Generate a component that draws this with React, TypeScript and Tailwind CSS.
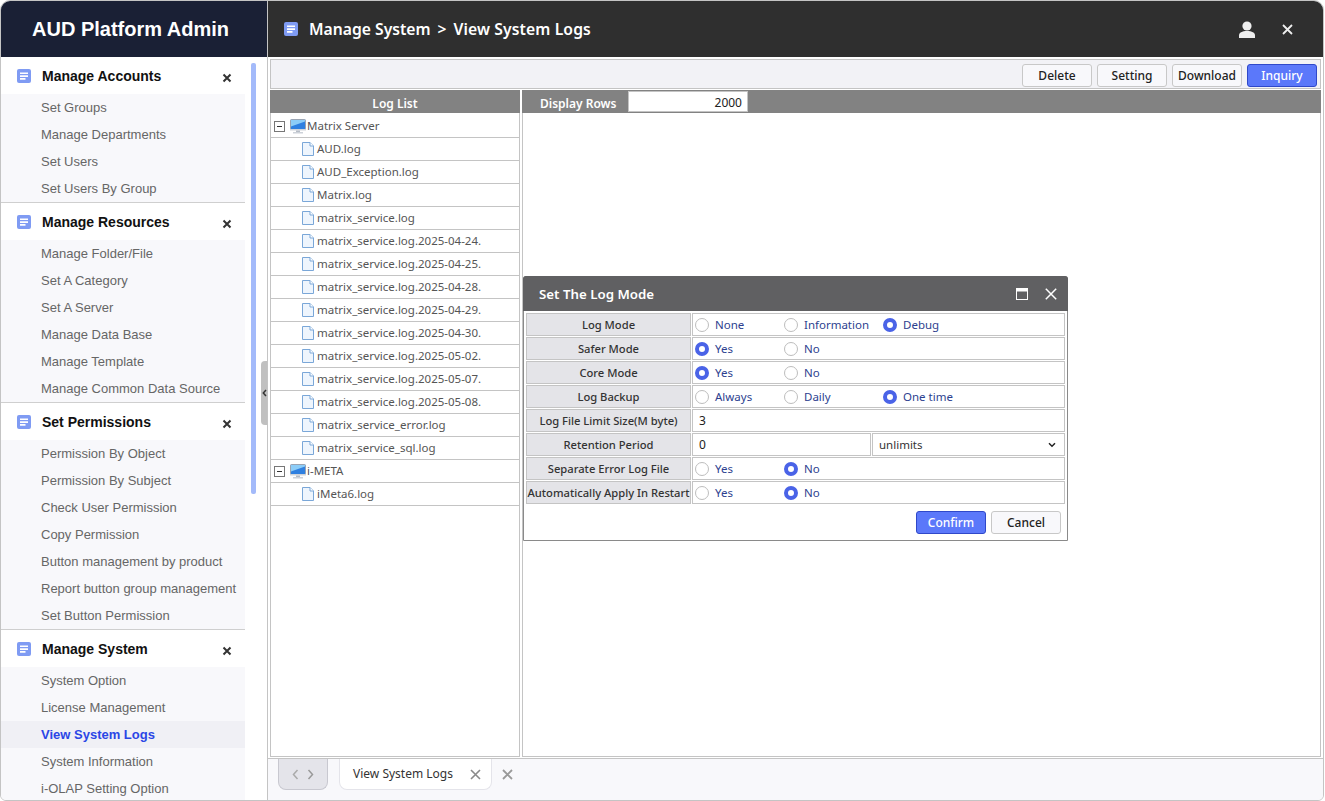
import React from 'react';

const menus = [
  { title: 'Manage Accounts', items: ['Set Groups', 'Manage Departments', 'Set Users', 'Set Users By Group'] },
  {
    title: 'Manage Resources',
    items: ['Manage Folder/File', 'Set A Category', 'Set A Server', 'Manage Data Base', 'Manage Template', 'Manage Common Data Source'],
  },
  {
    title: 'Set Permissions',
    items: [
      'Permission By Object',
      'Permission By Subject',
      'Check User Permission',
      'Copy Permission',
      'Button management by product',
      'Report button group management',
      'Set Button Permission',
    ],
  },
  { title: 'Manage System', items: ['System Option', 'License Management', 'View System Logs', 'System Information', 'i-OLAP Setting Option'] },
];

const matrixLogs = [
  'AUD.log',
  'AUD_Exception.log',
  'Matrix.log',
  'matrix_service.log',
  'matrix_service.log.2025-04-24.',
  'matrix_service.log.2025-04-25.',
  'matrix_service.log.2025-04-28.',
  'matrix_service.log.2025-04-29.',
  'matrix_service.log.2025-04-30.',
  'matrix_service.log.2025-05-02.',
  'matrix_service.log.2025-05-07.',
  'matrix_service.log.2025-05-08.',
  'matrix_service_error.log',
  'matrix_service_sql.log',
];

const sans = 'font-["Liberation_Sans",Arial,sans-serif]';
const ui = 'font-["Noto_Sans",sans-serif]';

function DocIcon() {
  return (
    <svg width="14" height="14" viewBox="0 0 14 14" className="shrink-0">
      <rect width="14" height="14" rx="2" fill="#7f9bf3" />
      <path d="M3 3.5h8v1.6H3zM3 6.3h8v1.6H3zM3 9.1h5.5v1.6H3z" fill="#fff" />
    </svg>
  );
}

function SmallX({ className }: { className: string }) {
  return (
    <svg width="10" height="10" viewBox="0 0 10 10" className={className}>
      <path d="M1.5 1.500l7 7M8.500 1.500l-7 7" stroke="currentColor" strokeWidth="2" fill="none" />
    </svg>
  );
}

function MenuGroup({ title, items }: { title: string; items: string[] }) {
  return (
    <div className="border-b border-[#cfcfcf] last:border-b-0">
      <div className="h-[37px] flex items-center pl-[16px] pr-[13px] bg-white">
        <span className="mt-[3px] -translate-y-[1px]">
          <DocIcon />
        </span>
        <span className={`ml-[11px] pt-[2px] text-[14px] font-bold text-[#111] ${sans}`}>{title}</span>
        <SmallX className="ml-auto mt-[4px] text-[#333]" />
      </div>
      <div className="bg-[#f8f8fb]">
        {items.map((item) => (
          <div
            key={item}
            className={`h-[27px] leading-[27px] pl-[40px] text-[13px] whitespace-nowrap ${sans} ${
              item === 'View System Logs' ? 'bg-[#f0f0f5] font-bold text-[#2b46e6]' : 'text-[#666]'
            }`}
          >
            {item}
          </div>
        ))}
      </div>
    </div>
  );
}

function Sidebar() {
  return (
    <aside className="w-[267px] shrink-0 flex flex-col border-r border-[#c4c4c4] relative overflow-hidden">
      <div className={`h-[56px] shrink-0 bg-[#1a2035] text-white text-[20px] font-bold flex items-center pl-[31px] ${sans}`}>
        AUD Platform Admin
      </div>
      <div className="w-[244px] flex-1 overflow-hidden">
        {menus.map((menu) => (
          <MenuGroup key={menu.title} title={menu.title} items={menu.items} />
        ))}
      </div>
      {/* scrollbar + collapse handle */}
      <div className="absolute left-[250px] top-[62px] w-[5px] h-[431px] rounded-[2px] bg-[#a3bafa]" />
      <div className="absolute left-[260px] top-[360px] w-[7px] h-[64px] rounded-l-[4px] bg-[#c0c0c0] flex items-center justify-center">
        <svg width="5" height="8" viewBox="0 0 5 8">
          <path d="M4 1L1.300 4 4 7" stroke="#333" strokeWidth="1.5" fill="none" />
        </svg>
      </div>
    </aside>
  );
}

function FileIcon() {
  return (
    <svg width="12" height="14" viewBox="0 0 12 14" className="shrink-0">
      <path d="M.5.5h7.500l3.500 3.500v9.500H.5z" fill="#eef5fd" stroke="#7aa7d8" />
      <path d="M8 .5v3.500h3.500" fill="#fff" stroke="#7aa7d8" />
    </svg>
  );
}

function MonitorIcon() {
  return (
    <svg width="16" height="15" viewBox="0 0 16 15" className="shrink-0">
      <rect x=".5" y=".5" width="15" height="10" rx="1" fill="#2f80e0" stroke="#9aa4b2" />
      <path d="M1 7.500L15 2.500V1H1z" fill="#8ccdf8" />
      <rect y="10" width="16" height="1.500" fill="#d0d4da" />
      <rect x="6" y="11.500" width="4" height="1.500" fill="#b5bcc6" />
      <rect x="3" y="13" width="10" height="1.500" fill="#cdd2d9" />
    </svg>
  );
}

function Expander() {
  return (
    <span className="w-[11px] h-[11px] border border-[#777] flex items-center justify-center shrink-0">
      <span className="w-[5px] h-[1px] bg-[#333]" />
    </span>
  );
}

function ServerRow({ name }: { name: string }) {
  return (
    <div className="h-[23px] flex items-center border-b border-[#c4c4c4] pl-[3px]">
      <Expander />
      <span className="ml-[5px]">
        <MonitorIcon />
      </span>
      <span className="ml-[1px] text-[11.5px] text-[#555]">{name}</span>
    </div>
  );
}

function FileRow({ name }: { name: string }) {
  return (
    <div className="h-[23px] flex items-center border-b border-[#c4c4c4] pl-[31px]">
      <FileIcon />
      <span className="ml-[3px] text-[11.5px] text-[#555] whitespace-nowrap">{name}</span>
    </div>
  );
}

function ToolButton({ label, primary }: { label: string; primary?: boolean }) {
  return (
    <button
      className={`h-[23px] w-[70px] rounded-[3px] border text-[12px] font-medium leading-none pt-[1px] ${
        primary ? 'bg-[#5b78fa] border-[#2f48c9] text-white' : 'bg-[#f8f8fb] border-[#c8c8c8] text-[#222]'
      }`}
    >
      {label}
    </button>
  );
}

function Radio({ label, checked, width }: { label: string; checked?: boolean; width: string }) {
  return (
    <span className={`flex items-center ${width}`}>
      <span
        className={`w-[14px] h-[14px] rounded-full shrink-0 ${
          checked ? 'border-[4px] border-[#4a63e7] bg-white' : 'border border-[#bdbdbd] bg-white'
        }`}
      />
      <span className="ml-[6px] text-[11.5px] text-[#2d3f8f]">{label}</span>
    </span>
  );
}

function Row({ label, children }: { label: string; children: React.ReactNode }) {
  return (
    <div className="flex gap-[1px] h-[23px]">
      <div className="w-[165px] shrink-0 bg-[#e4e4e8] border border-[#c4c4c4] flex items-center justify-center pt-[1px] text-[11.2px] font-medium text-[#333] whitespace-nowrap overflow-hidden">
        {label}
      </div>
      {children}
    </div>
  );
}

function ValueCell({ children }: { children: React.ReactNode }) {
  return <div className="flex-1 border border-[#c4c4c4] flex items-center pl-[2px] bg-white">{children}</div>;
}

function YesNo({ yes }: { yes: boolean }) {
  return (
    <ValueCell>
      <Radio label="Yes" checked={yes} width="w-[89px]" />
      <Radio label="No" checked={!yes} width="w-[99px]" />
    </ValueCell>
  );
}

function LogModeDialog() {
  return (
    <div className={`absolute left-[255px] top-[219px] w-[545px] h-[265px] bg-white border border-[#8a8a8a] rounded-t-[3px] ${ui}`}>
      <div className="h-[35px] -mt-[1px] -mx-[1px] rounded-t-[3px] bg-[#606062] flex items-center pl-[16px] pr-[11px]">
        <span className="pt-[2px] text-[13.3px] font-semibold text-white">Set The Log Mode</span>
        <svg width="12" height="12" viewBox="0 0 12 12" className="ml-auto">
          <rect x=".5" y=".5" width="11" height="11" fill="none" stroke="#fff" />
          <rect x="0" y="0" width="12" height="3.500" fill="#fff" />
        </svg>
        <svg width="12" height="12" viewBox="0 0 12 12" className="ml-[17px]">
          <path d="M.8.8l10.400 10.400M11.200.8L.8 11.200" stroke="#fff" strokeWidth="1.5" fill="none" />
        </svg>
      </div>
      <div className="pt-[2px] px-[2px] flex flex-col gap-[1px]">
        <Row label="Log Mode">
          <ValueCell>
            <Radio label="None" width="w-[89px]" />
            <Radio label="Information" width="w-[99px]" />
            <Radio label="Debug" checked width="w-[99px]" />
          </ValueCell>
        </Row>
        <Row label="Safer Mode">
          <YesNo yes />
        </Row>
        <Row label="Core Mode">
          <YesNo yes />
        </Row>
        <Row label="Log Backup">
          <ValueCell>
            <Radio label="Always" width="w-[89px]" />
            <Radio label="Daily" width="w-[99px]" />
            <Radio label="One time" checked width="w-[99px]" />
          </ValueCell>
        </Row>
        <Row label="Log File Limit Size(M byte)">
          <div className="flex-1 border border-[#c4c4c4] flex items-center pl-[6px] text-[12px] text-[#222]">3</div>
        </Row>
        <Row label="Retention Period">
          <div className="w-[179px] border border-[#c4c4c4] flex items-center pl-[6px] text-[12px] text-[#222]">0</div>
          <div className="flex-1 border border-[#c4c4c4] flex items-center pl-[6px] pr-[8px] text-[11.5px] text-[#333] justify-between">
            unlimits
            <svg width="8" height="6" viewBox="0 0 8 6">
              <path d="M1 1.300l3 3 3-3" stroke="#222" strokeWidth="1.5" fill="none" />
            </svg>
          </div>
        </Row>
        <Row label="Separate Error Log File">
          <YesNo yes={false} />
        </Row>
        <Row label="Automatically Apply In Restart">
          <YesNo yes={false} />
        </Row>
      </div>
      <div className="flex justify-end gap-[5px] pt-[7px] pr-[6px]">
        <ToolButton label="Confirm" primary />
        <ToolButton label="Cancel" />
      </div>
    </div>
  );
}

function TabBar() {
  return (
    <div className={`h-[42px] shrink-0 bg-[#f8f8fb] border-t border-[#c4c4c4] flex items-start pl-[10px] ${ui}`}>
      <div className="w-[50px] h-[31px] bg-[#e4e4ea] border border-t-0 border-[#c8c8d0] rounded-b-[8px] flex items-center justify-center gap-[8px]">
        <svg width="7" height="11" viewBox="0 0 7 11">
          <path d="M5.500 1L1.500 5.500l4 4.500" stroke="#aaa" strokeWidth="1.5" fill="none" />
        </svg>
        <svg width="7" height="11" viewBox="0 0 7 11">
          <path d="M1.500 1l4 4.500-4 4.500" stroke="#999" strokeWidth="1.5" fill="none" />
        </svg>
      </div>
      <div className="ml-[11px] w-[153px] h-[31px] bg-white border border-t-0 border-[#e4e4ea] rounded-b-[8px] flex items-center pl-[13px]">
        <span className="text-[12px] text-[#333]">View System Logs</span>
        <svg width="11" height="11" viewBox="0 0 11 11" className="ml-auto mr-[10px]">
          <path d="M1 1l9 9M10 1l-9 9" stroke="#8a8a8a" strokeWidth="1.6" fill="none" />
        </svg>
      </div>
      <svg width="11" height="11" viewBox="0 0 11 11" className="ml-[10px] mt-[10px]">
        <path d="M1 1l9 9M10 1l-9 9" stroke="#999" strokeWidth="1.8" fill="none" />
      </svg>
    </div>
  );
}

export default function App() {
  return (
    <div className="w-[1325px] h-[801px] bg-white overflow-hidden">
      <div className="w-[1324px] h-[801px] flex border border-[#c4c4c4] rounded-t-[10px] rounded-b-[6px] overflow-hidden">
        <Sidebar />
        <main className="flex-1 flex flex-col min-w-0">
          <header className={`h-[56px] shrink-0 bg-[#2f2f2f] flex items-center pl-[16px] pr-[30px] ${ui}`}>
            <DocIcon />
            <span className="ml-[11px] pt-[2px] text-[15.7px] font-semibold text-white flex gap-[7px] whitespace-nowrap">
              <span>Manage System</span>
              <span>&gt;</span>
              <span className="tracking-[0.1px]">View System Logs</span>
            </span>
            <svg width="18" height="17" viewBox="0 0 18 17" className="ml-auto">
              <circle cx="9" cy="5" r="4.600" fill="#eee" />
              <path d="M1 17v-2.500C1 11.500 4 10 9 10s8 1.500 8 4.500V17z" fill="#eee" />
            </svg>
            <svg width="11" height="11" viewBox="0 0 11 11" className="ml-[26px]">
              <path d="M1 1l9 9M10 1l-9 9" stroke="#eee" strokeWidth="1.8" fill="none" />
            </svg>
          </header>
          <div className={`flex-1 min-h-0 flex flex-col relative pt-[2px] pl-[2px] pr-[2px] ${ui}`}>
            <div className="h-[30px] shrink-0 bg-[#f2f2f6] border border-[#c4c4c4] flex items-center justify-end gap-[5px] pr-[3px] pt-[2px]">
              <ToolButton label="Delete" />
              <ToolButton label="Setting" />
              <ToolButton label="Download" />
              <ToolButton label="Inquiry" primary />
            </div>
            <div className="flex-1 min-h-0 flex gap-[2px] pt-[1px] pb-[1px]">
              <section className="w-[250px] shrink-0 flex flex-col border-x border-b border-[#c4c4c4]">
                <div className="h-[23px] shrink-0 -mx-[1px] mb-[2px] pt-[5px] bg-[#828282] text-white text-[12px] font-semibold flex items-center justify-center">
                  Log List
                </div>
                <ServerRow name="Matrix Server" />
                {matrixLogs.map((name) => (
                  <FileRow key={name} name={name} />
                ))}
                <ServerRow name="i-META" />
                <FileRow name="iMeta6.log" />
              </section>
              <section className="flex-1 min-w-0 flex flex-col border-x border-b border-[#c4c4c4]">
                <div className="h-[23px] shrink-0 -mx-[1px] bg-[#828282] flex items-start pl-[18px]">
                  <span className="w-[88px] pt-[5px] text-white text-[12px] font-semibold">Display Rows</span>
                  <span className="w-[120px] h-[21px] mt-[1px] bg-white border border-[#c4c4c4] text-right pr-[5px] text-[12px] leading-[21px] text-[#222]">
                    2000
                  </span>
                </div>
              </section>
            </div>
            <LogModeDialog />
          </div>
          <TabBar />
        </main>
      </div>
    </div>
  );
}
